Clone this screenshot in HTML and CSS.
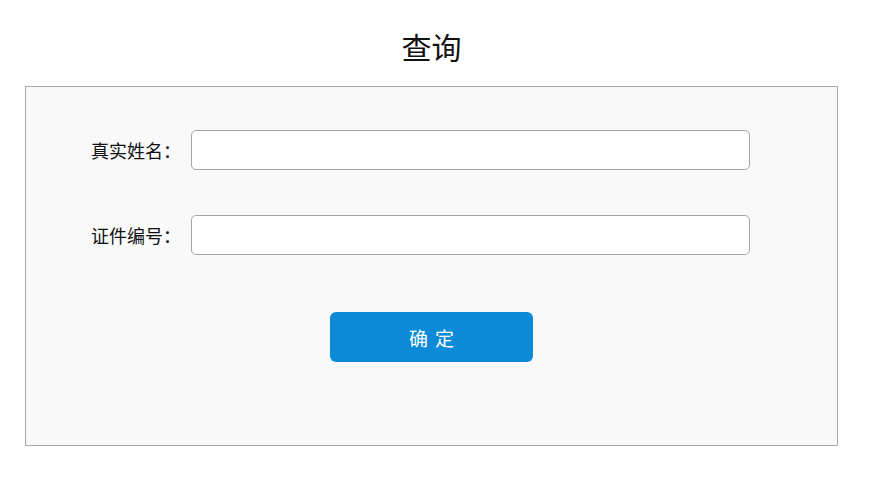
FILE: index.html
```html
<!DOCTYPE html>
<html lang="zh-CN">
<head>
<meta charset="utf-8">
<title>查询</title>
<link rel="stylesheet" href="styles.css">
</head>
<body>
<div class="page">
  <h1 class="title">查询</h1>
  <form class="panel">
    <div class="row">
      <label class="label" for="name">真实姓名：</label>
      <input class="field" id="name" type="text">
    </div>
    <div class="row">
      <label class="label" for="idno">证件编号：</label>
      <input class="field" id="idno" type="text">
    </div>
    <div class="actions">
      <button class="btn" type="button">确定</button>
    </div>
  </form>
</div>
</body>
</html>
```

FILE: styles.css
```css
* { box-sizing: border-box; }
html, body { margin: 0; padding: 0; background: #fff; }
body {
  font-family: "Microsoft YaHei", "Noto Sans CJK SC", "Noto Sans", sans-serif;
  color: #111;
}
.page {
  width: 813px;
  margin-left: 25px;
}
.title {
  margin: 0;
  padding-top: 26px;
  height: 86px;
  line-height: 40px;
  font-size: 30px;
  font-weight: normal;
  text-align: center;
  color: #111;
}
.panel {
  height: 360px;
  background: #f9f9f9;
  border: 1px solid #a9a9a9;
  padding-top: 43px;
  display: flex;
  flex-direction: column;
}
.row {
  display: flex;
  align-items: center;
  height: 40px;
  margin-bottom: 45px;
}
.row + .row { margin-bottom: 57px; }
.label {
  width: 155px;
  margin-right: 10px;
  text-align: right;
  font-size: 18px;
  color: #111;
}
.field {
  width: 559px;
  height: 40px;
  border: 1px solid #a6a6a6;
  border-radius: 5px;
  background: #fff;
  outline: none;
  padding: 0 10px;
  font-size: 16px;
}
.actions {
  display: flex;
  justify-content: center;
}
.btn {
  width: 203px;
  height: 50px;
  border: none;
  border-radius: 6px;
  background: #0b8bd7;
  color: #fff;
  font-family: inherit;
  font-size: 19px;
  letter-spacing: 7px;
  text-indent: 7px;
  cursor: pointer;
}
```
